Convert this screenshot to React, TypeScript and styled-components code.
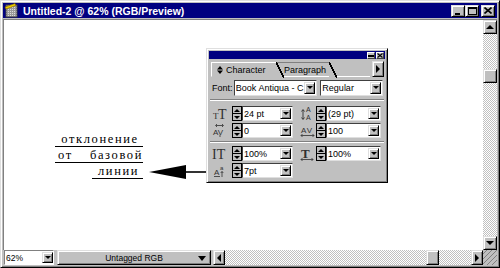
import React from "react";
import styled, { createGlobalStyle } from "styled-components";

const Global = createGlobalStyle`
  html, body { margin: 0; padding: 0; background: #c0c0c0; }
  body {
    width: 500px; height: 268px; overflow: hidden;
    font-family: "Liberation Sans", Arial, sans-serif;
  }
`;

const raised = `
  border: 1px solid;
  border-color: #dfdfdf #000 #000 #dfdfdf;
  box-shadow: inset 1px 1px #fff, inset -1px -1px #808080;
  background: #c0c0c0;
  box-sizing: border-box;
`;

const dither = `
  background: repeating-conic-gradient(#c0c0c0 0 25%, #fff 0 50%) 0 0 / 2px 2px;
`;

const Window = styled.div`
  width: 500px;
  height: 268px;
  box-sizing: border-box;
  background: #c0c0c0;
  border: 1px solid;
  border-color: #dfdfdf #000 #000 #dfdfdf;
  box-shadow: inset 1px 1px #fff, inset -1px -1px #808080;
  padding: 2px;
  display: flex;
  flex-direction: column;
`;

const TitleBar = styled.div`
  height: 15px;
  background: #000080;
  display: flex;
  align-items: center;
  padding: 0 2px 0 1px;
  color: #fff;
  font-weight: bold;
  font-size: 10.5px;
`;

const TitleText = styled.span`
  margin-left: 3px;
  flex: 1;
  white-space: nowrap;
`;

const CapButton = styled.div<{ $gap?: number }>`
  ${raised}
  width: 14px;
  height: 12px;
  margin-left: ${(p) => p.$gap ?? 0}px;
  display: flex;
  align-items: center;
  justify-content: center;
`;

const Body = styled.div`
  flex: 1;
  margin-top: 1px;
  display: flex;
  border-top: 1px solid #808080;
  border-left: 1px solid #808080;
  min-height: 0;
`;

const Canvas = styled.div`
  position: relative;
  flex: 1;
  background: #fff;
  overflow: hidden;
`;

const VScroll = styled.div`
  width: 14px;
  display: flex;
  flex-direction: column;
  ${dither}
`;

const ScrollTrack = styled.div<{ $vertical?: boolean }>`
  flex: 1;
  display: flex;
  flex-direction: ${(p) => (p.$vertical ? "column" : "row")};
`;

const Thumb = styled.div<{ $offset: number; $vertical?: boolean }>`
  ${raised}
  width: ${(p) => (p.$vertical ? 14 : 13)}px;
  height: ${(p) => (p.$vertical ? 14 : 15)}px;
  ${(p) => (p.$vertical ? `margin-top: ${p.$offset}px;` : `margin-left: ${p.$offset}px;`)}
`;

const ArrowBtn = styled.div<{ $dir: "up" | "down" | "left" | "right"; $w?: number }>`
  ${raised}
  width: ${(p) => p.$w ?? 14}px;
  height: ${(p) => (p.$dir === "up" || p.$dir === "down" ? 14 : 15)}px;
  flex-shrink: 0;
  display: flex;
  align-items: center;
  justify-content: center;
  &::before {
    content: "";
    width: 0;
    height: 0;
    ${(p) =>
      p.$dir === "up"
        ? "border-left:4px solid transparent;border-right:4px solid transparent;border-bottom:4px solid #000;"
        : p.$dir === "down"
        ? "border-left:4px solid transparent;border-right:4px solid transparent;border-top:4px solid #000;"
        : p.$dir === "left"
        ? "border-top:4px solid transparent;border-bottom:4px solid transparent;border-right:4px solid #000;"
        : "border-top:4px solid transparent;border-bottom:4px solid transparent;border-left:4px solid #000;"}
  }
`;

const BottomBar = styled.div`
  height: 15px;
  display: flex;
  align-items: stretch;
  font-size: 8.5px;
`;

const ZoomField = styled.div`
  width: 50px;
  margin-left: 1px;
  box-sizing: border-box;
  background: #fff;
  border: 1px solid;
  border-color: #808080 #fff #fff #808080;
  display: flex;
  align-items: center;
  padding-left: 1px;
`;

const StatusPanel = styled.div`
  ${raised}
  width: 154px;
  margin-left: 3px;
  margin-right: 2px;
  display: flex;
  align-items: center;
  position: relative;
  justify-content: center;
  &::after {
    content: "";
    position: absolute;
    right: 4px;
    top: 5px;
    border-left: 4px solid transparent;
    border-right: 4px solid transparent;
    border-top: 5px solid #000;
  }
`;

const HTrack = styled.div`
  flex: 1;
  display: flex;
  ${dither}
`;

const Grip = styled.div`
  width: 14px;
  background:
    linear-gradient(135deg, transparent 45%, #808080 45%, #808080 52%, #fff 52%, #fff 58%, transparent 58%),
    #c0c0c0;
  background-size: 5px 5px;
  background-position: right bottom;
`;

/* palette */

const Palette = styled.div`
  position: absolute;
  left: 202px;
  top: 28px;
  width: 182px;
  height: 135px;
  ${raised}
  padding: 2px;
  font-size: 9px;
  color: #000;
`;

const PTitle = styled.div`
  height: 8px;
  background: #000080;
  display: flex;
  justify-content: flex-end;
  align-items: center;
  gap: 1px;
  padding-right: 1px;
`;

const PTitleBtn = styled.div`
  width: 8px;
  height: 7px;
  box-sizing: border-box;
  background: #c0c0c0;
  border: 1px solid;
  border-color: #fff #404040 #404040 #fff;
  display: flex;
  align-items: center;
  justify-content: center;
`;

const TabRow = styled.div`
  height: 17px;
  margin-top: 1px;
  display: flex;
  align-items: flex-end;
  padding-left: 2px;
`;

const Tab = styled.div<{ $active?: boolean; $w: number }>`
  position: relative;
  width: ${(p) => p.$w}px;
  height: 15px;
  box-sizing: border-box;
  padding-left: ${(p) => (p.$active ? 5 : 8)}px;
  display: flex;
  align-items: center;
  gap: 3px;
  white-space: nowrap;
  background: #c0c0c0;
  border-top: 1px solid ${(p) => (p.$active ? "#fff" : "#808080")};
  border-left: ${(p) => (p.$active ? "1px solid #fff" : "none")};
  border-bottom: 1px solid ${(p) => (p.$active ? "#c0c0c0" : "#fff")};
  z-index: ${(p) => (p.$active ? 2 : 1)};
  &::after {
    content: "";
    position: absolute;
    top: -1px;
    right: -8px;
    width: 8px;
    height: 16px;
    background: linear-gradient(
      to top right,
      #c0c0c0 0 calc(50% - 0.7px),
      #000 calc(50% - 0.7px) calc(50% + 0.7px),
      transparent calc(50% + 0.7px)
    );
  }
`;

const TabFill = styled.div`
  flex: 1;
  height: 15px;
  box-sizing: border-box;
  border-bottom: 1px solid #fff;
  margin-right: 2px;
`;

const MenuBtn = styled.div`
  ${raised}
  width: 12px;
  height: 16px;
  display: flex;
  align-items: center;
  justify-content: center;
  margin-right: 1px;
  &::before {
    content: "";
    border-top: 4px solid transparent;
    border-bottom: 4px solid transparent;
    border-left: 4px solid #000;
  }
`;

const PBody = styled.div`
  padding: 0 2px 0 3px;
`;

const PRow = styled.div<{ $top: number }>`
  display: flex;
  align-items: center;
  margin-top: ${(p) => p.$top}px;
  height: 15px;
`;

const FontLabel = styled.span`
  width: 22px;
  white-space: nowrap;
`;

const Sep = styled.div<{ $top: number }>`
  margin: ${(p) => p.$top}px -1px 0 -2px;
  height: 0;
  border-top: 1px solid #808080;
  border-bottom: 1px solid #fff;
`;

const Cell = styled.div<{ $gap?: number }>`
  display: flex;
  align-items: center;
  margin-left: ${(p) => p.$gap ?? 0}px;
`;

const IconBox = styled.div<{ $w: number }>`
  width: ${(p) => p.$w}px;
  height: 15px;
  display: flex;
  align-items: center;
  svg { overflow: visible; }
`;

const Spinner = styled.div`
  width: 10px;
  height: 15px;
  box-sizing: border-box;
  display: flex;
  flex-direction: column;
  border: 1px solid #000;
  background: #c0c0c0;
`;

const SpinHalf = styled.div<{ $down?: boolean }>`
  flex: 1;
  display: flex;
  align-items: center;
  justify-content: center;
  border-top: ${(p) => (p.$down ? "1px solid #000" : "none")};
  &::before {
    content: "";
    border-left: 3px solid transparent;
    border-right: 3px solid transparent;
    ${(p) => (p.$down ? "border-top:3px solid #000;" : "border-bottom:3px solid #000;")}
  }
`;

const Field = styled.div<{ $w: number; $h?: number; $gap?: number }>`
  width: ${(p) => p.$w}px;
  height: ${(p) => p.$h ?? 15}px;
  margin-left: ${(p) => p.$gap ?? 0}px;
  box-sizing: border-box;
  background: #fff;
  border: 1px solid;
  border-color: #404040 #dfdfdf #dfdfdf #404040;
  display: flex;
  align-items: center;
  padding-left: 1px;
  padding-right: 1px;
`;

const FieldText = styled.span`
  flex: 1;
  white-space: nowrap;
  overflow: hidden;
`;

const DropBtn = styled.div<{ $h?: number }>`
  ${raised}
  width: 11px;
  height: ${(p) => p.$h ?? 11}px;
  display: flex;
  align-items: center;
  justify-content: center;
  flex-shrink: 0;
  &::before {
    content: "";
    border-left: 3px solid transparent;
    border-right: 3px solid transparent;
    border-top: 3px solid #000;
  }
`;

const Note = styled.div`
  position: absolute;
  left: 51px;
  top: 112px;
  width: 88px;
  display: flex;
  flex-direction: column;
  align-items: flex-end;
  gap: 1px;
  font-family: "Liberation Serif", "Times New Roman", serif;
  font-size: 12.5px;
  color: #000;
`;

const NoteLine = styled.div<{ $w?: number; $spread?: boolean }>`
  width: ${(p) => p.$w ?? 88}px;
  height: 15px;
  line-height: 15px;
  border-bottom: 1px solid #000;
  display: flex;
  justify-content: ${(p) => (p.$spread ? "space-between" : "center")};
  letter-spacing: 1.6px;
  padding-left: ${(p) => (p.$spread ? 3 : 2)}px;
  box-sizing: border-box;
`;

const Pointer = styled.svg`
  position: absolute;
  left: 144px;
  top: 144px;
`;

const DocIcon = () => (
  <svg width="16" height="15" viewBox="0 0 16 15">
    <defs>
      <pattern id="dt" width="2" height="2" patternUnits="userSpaceOnUse">
        <rect width="2" height="2" fill="#9a9a9a" />
        <rect width="1" height="1" fill="#dcdcdc" />
      </pattern>
    </defs>
    <rect x="2" y="2" width="11" height="12" fill="url(#dt)" stroke="#404040" strokeWidth="1" />
    <path d="M1 4 L11 0.5 L12 2.5 L2 6 Z" fill="#f0d000" stroke="#806000" strokeWidth="0.6" />
  </svg>
);

type IconKind = "size" | "lead" | "kern" | "track" | "vscale" | "hscale" | "shift";

const RowIcon = ({ kind }: { kind: IconKind }) => {
  const serif = "Liberation Serif, serif";
  const sans = "Liberation Sans, sans-serif";
  switch (kind) {
    case "size":
      return (
        <svg width="20" height="15">
          <text x="1" y="13" fontSize="9" fontFamily={serif} fill="#303030">T</text>
          <text x="6" y="13" fontSize="14" fontFamily={serif} fill="#303030">T</text>
        </svg>
      );
    case "lead":
      return (
        <svg width="16" height="15">
          <text x="6" y="6" fontSize="7" fontFamily={sans} fill="#303030">A</text>
          <text x="6" y="14" fontSize="7" fontFamily={sans} fill="#303030">A</text>
          <path d="M3 4 V13 M1.5 5.5 L3 3.5 L4.5 5.5 M1.5 11.5 L3 13.5 L4.5 11.5" stroke="#303030" fill="none" strokeWidth="0.9" />
        </svg>
      );
    case "kern":
      return (
        <svg width="20" height="15">
          <text x="1" y="12" fontSize="8" fontFamily={sans} fill="#303030">AV</text>
          <path d="M4 2.5 H11 M5 1 L3.5 2.5 L5 4 M10 1 L11.5 2.5 L10 4" stroke="#303030" fill="none" strokeWidth="0.8" />
          <path d="M8 12 V14" stroke="#303030" strokeWidth="0.8" />
        </svg>
      );
    case "track":
      return (
        <svg width="16" height="15">
          <text x="1" y="10" fontSize="8" fontFamily={sans} fill="#303030" letterSpacing="1">AV</text>
          <path d="M1 12.5 H14 M2.5 11 L1 12.5 L2.5 14 M12.5 11 L14 12.5 L12.5 14" stroke="#303030" fill="none" strokeWidth="0.8" />
        </svg>
      );
    case "vscale":
      return (
        <svg width="20" height="15">
          <text x="0" y="13" fontSize="14" fontFamily={serif} fill="#303030">IT</text>
        </svg>
      );
    case "hscale":
      return (
        <svg width="16" height="15">
          <text x="1" y="12" fontSize="13" fontFamily={serif} fontWeight="bold" fill="#303030">T</text>
          <path d="M1 13.5 H13 M2.5 12 L1 13.5 L2.5 15 M11.5 12 L13 13.5 L11.5 15" stroke="#303030" fill="none" strokeWidth="0.8" />
        </svg>
      );
    case "shift":
      return (
        <svg width="20" height="15">
          <text x="2" y="12" fontSize="8" fontFamily={sans} fill="#303030">A</text>
          <text x="8" y="7" fontSize="6" fontFamily={sans} fill="#303030">a</text>
          <path d="M10 14 V8.5 M8.7 10 L10 8.5 L11.3 10" stroke="#303030" fill="none" strokeWidth="0.8" />
          <path d="M2 13.5 H8" stroke="#303030" strokeWidth="0.8" />
        </svg>
      );
  }
};

type Setting = { icon: IconKind; value: string };

const SettingCell = ({ icon, value, iconW, fieldW, gap }: Setting & { iconW: number; fieldW: number; gap?: number }) => (
  <Cell $gap={gap}>
    <IconBox $w={iconW}>
      <RowIcon kind={icon} />
    </IconBox>
    <Spinner>
      <SpinHalf />
      <SpinHalf $down />
    </Spinner>
    <Field $w={fieldW}>
      <FieldText>{value}</FieldText>
      <DropBtn />
    </Field>
  </Cell>
);

const rows: Setting[][] = [
  [
    { icon: "size", value: "24 pt" },
    { icon: "lead", value: "(29 pt)" },
  ],
  [
    { icon: "kern", value: "0" },
    { icon: "track", value: "100" },
  ],
  [
    { icon: "vscale", value: "100%" },
    { icon: "hscale", value: "100%" },
  ],
  [{ icon: "shift", value: "7pt" }],
];

const SettingRow = ({ items, top }: { items: Setting[]; top: number }) => (
  <PRow $top={top}>
    <SettingCell {...items[0]} iconW={20} fieldW={51} />
    {items[1] && <SettingCell {...items[1]} iconW={16} fieldW={55} gap={7} />}
  </PRow>
);

const TabArrows = () => (
  <svg width="6" height="8" viewBox="0 0 6 8">
    <path d="M0 3.5 L3 0 L6 3.5 Z M0 4.5 L3 8 L6 4.5 Z" fill="#000" />
  </svg>
);

export default function App() {
  return (
    <>
      <Global />
      <Window>
        <TitleBar>
          <DocIcon />
          <TitleText>Untitled-2 @ 62% (RGB/Preview)</TitleText>
          <CapButton>
            <svg width="8" height="8"><rect x="1" y="6" width="5" height="2" fill="#000" /></svg>
          </CapButton>
          <CapButton>
            <svg width="9" height="8"><rect x="0.5" y="0.5" width="8" height="7" fill="none" stroke="#000" /><rect x="0" y="0" width="9" height="2" fill="#000" /></svg>
          </CapButton>
          <CapButton $gap={2}>
            <svg width="8" height="7"><path d="M0.5 0.5 L7.5 6.5 M7.5 0.5 L0.5 6.5" stroke="#000" strokeWidth="1.6" /></svg>
          </CapButton>
        </TitleBar>
        <Body>
          <Canvas>
            <Note>
              <NoteLine>отклонение</NoteLine>
              <NoteLine $spread>
                <span>от</span>
                <span>базовой</span>
              </NoteLine>
              <NoteLine $w={51}>линии</NoteLine>
            </Note>
            <Pointer width="62" height="16" viewBox="0 0 62 16">
              <polygon points="1,8 38,1 38,15" fill="#000" />
              <line x1="36" y1="8" x2="62" y2="8" stroke="#000" strokeWidth="1.6" />
            </Pointer>
            <Palette>
              <PTitle>
                <PTitleBtn>
                  <svg width="6" height="5"><rect x="0" y="2" width="6" height="2" fill="#000" /></svg>
                </PTitleBtn>
                <PTitleBtn>
                  <svg width="6" height="5"><path d="M0.5 0.5 L5.5 4.5 M5.5 0.5 L0.5 4.5" stroke="#000" strokeWidth="1.2" /></svg>
                </PTitleBtn>
              </PTitle>
              <TabRow>
                <Tab $active $w={65}>
                  <TabArrows />
                  <span>Character</span>
                </Tab>
                <Tab $w={53}>Paragraph</Tab>
                <TabFill />
                <MenuBtn />
              </TabRow>
              <PBody>
                <PRow $top={3}>
                  <FontLabel>Font:</FontLabel>
                  <Field $w={84} $h={16}>
                    <FieldText>Book Antiqua - C</FieldText>
                    <DropBtn $h={12} />
                  </Field>
                  <Field $w={63} $h={16} $gap={3}>
                    <FieldText>Regular</FieldText>
                    <DropBtn $h={12} />
                  </Field>
                </PRow>
                <Sep $top={4} />
                <SettingRow items={rows[0]} top={5} />
                <SettingRow items={rows[1]} top={2} />
                <Sep $top={3} />
                <SettingRow items={rows[2]} top={3} />
                <SettingRow items={rows[3]} top={2} />
              </PBody>
            </Palette>
          </Canvas>
          <VScroll>
            <ArrowBtn $dir="up" />
            <ScrollTrack $vertical>
              <Thumb $vertical $offset={35} />
            </ScrollTrack>
            <ArrowBtn $dir="down" />
          </VScroll>
        </Body>
        <BottomBar>
          <ZoomField>
            <FieldText>62%</FieldText>
            <DropBtn />
          </ZoomField>
          <StatusPanel>Untagged RGB</StatusPanel>
          <ArrowBtn $dir="left" $w={12} />
          <HTrack>
            <Thumb $offset={201} />
          </HTrack>
          <ArrowBtn $dir="right" $w={12} />
          <Grip />
        </BottomBar>
      </Window>
    </>
  );
}
